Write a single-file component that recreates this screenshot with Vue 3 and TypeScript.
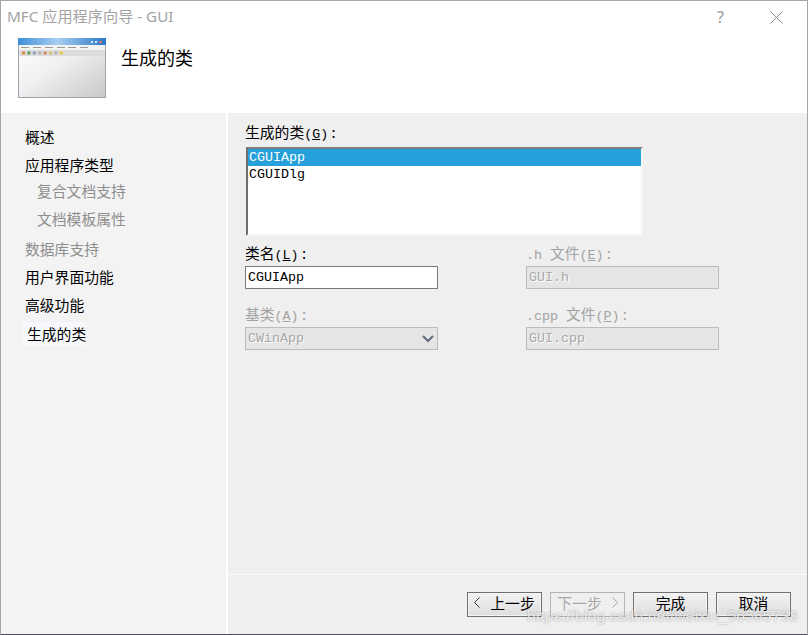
<script setup lang="ts">
interface NavItem { label: string; gap: number; sub?: boolean; off?: boolean; active?: boolean }
const nav: NavItem[] = [
  { label: '概述', gap: 0 },
  { label: '应用程序类型', gap: 4 },
  { label: '复合文档支持', gap: 2, sub: true, off: true },
  { label: '文档模板属性', gap: 4, sub: true, off: true },
  { label: '数据库支持', gap: 6, off: true },
  { label: '用户界面功能', gap: 4 },
  { label: '高级功能', gap: 4 },
  { label: '生成的类', gap: 5, active: true },
]
const menuBars = [3, 15, 27, 39, 50, 62]
const toolColors = ['#e08a3c', '#5aa05a', '#8aa0c0', '#b0b0b0', '#d08a60', '#d8c070', '#b0b0b0', '#e8c840']
</script>

<template>
  <div class="win">
    <header class="top">
      <div class="titlebar">
        <span class="title">MFC 应用程序向导 - GUI</span>
        <span class="help">?</span>
        <svg class="close" width="13" height="13" viewBox="0 0 13 13">
          <path d="M0.5 0.5L12.5 12.5M12.5 0.5L0.5 12.5" stroke="#8a8a8a" stroke-width="1" fill="none" />
        </svg>
      </div>
      <div class="banner">
        <svg class="thumb" width="88" height="60" viewBox="0 0 88 60">
          <defs>
            <linearGradient id="tb" x1="0" x2="1" y1="0" y2="0">
              <stop offset="0" stop-color="#3f8fd8" />
              <stop offset="0.45" stop-color="#a8cdef" />
              <stop offset="1" stop-color="#2a78c8" />
            </linearGradient>
            <linearGradient id="bd" x1="0" x2="1" y1="0" y2="1">
              <stop offset="0" stop-color="#ffffff" />
              <stop offset="0.45" stop-color="#f0f0f2" />
              <stop offset="1" stop-color="#c8c8c8" />
            </linearGradient>
          </defs>
          <rect x="0.5" y="0.5" width="87" height="59" fill="url(#bd)" stroke="#a2a2aa" />
          <rect x="0" y="0" width="88" height="7" fill="url(#tb)" />
          <rect x="73" y="3" width="2" height="2" fill="#dce8f4" />
          <rect x="77" y="3" width="2" height="2" fill="#dce8f4" />
          <rect x="81" y="3" width="3" height="2" fill="#d87860" />
          <rect x="1" y="7" width="86" height="5" fill="#f4f4f4" />
          <rect v-for="(x, i) in menuBars" :key="i" :x="x" y="9" width="8" height="1" fill="#9a9a9a" />
          <rect x="1" y="12" width="86" height="6" fill="#dcdcdc" />
          <rect v-for="(c, i) in toolColors" :key="c + i" :x="4 + i * 5.4" y="13.5" width="3" height="3" :fill="c" />
        </svg>
        <h1 class="heading">生成的类</h1>
      </div>
    </header>

    <div class="main">
      <nav class="side">
        <div
          v-for="item in nav"
          :key="item.label"
          class="nav-item"
          :class="{ sub: item.sub, off: item.off, active: item.active }"
          :style="{ marginTop: item.gap + 'px' }"
        >{{ item.label }}</div>
      </nav>

      <section class="panel">
        <div class="content">
          <div class="label">生成的类<span class="mn">(<u>G</u>)</span> :</div>
          <div class="list">
            <div class="row selected">CGUIApp</div>
            <div class="row">CGUIDlg</div>
          </div>

          <div class="form">
            <div class="field">
              <div class="label">类名<span class="mn">(<u>L</u>)</span> :</div>
              <div class="box edit">CGUIApp</div>
            </div>
            <div class="field">
              <div class="label dim"><span class="mn">.h&nbsp;</span>文件<span class="mn">(<u>E</u>)</span> :</div>
              <div class="box disabled">GUI.h</div>
            </div>
            <div class="field">
              <div class="label dim">基类<span class="mn">(<u>A</u>)</span> :</div>
              <div class="box disabled combo">
                <span>CWinApp</span>
                <svg width="12" height="8" viewBox="0 0 12 8">
                  <path d="M1 1L6 6L11 1" stroke="#5f6b78" stroke-width="2" fill="none" />
                </svg>
              </div>
            </div>
            <div class="field">
              <div class="label dim"><span class="mn">.cpp&nbsp;</span>文件<span class="mn">(<u>P</u>)</span> :</div>
              <div class="box disabled">GUI.cpp</div>
            </div>
          </div>
        </div>

        <footer class="foot">
          <button class="btn">
            <svg class="chev" width="6" height="11" viewBox="0 0 6 11"><path d="M5.5 0.5L0.5 5.5L5.5 10.5" stroke="#333" fill="none" /></svg>
            <span>上一步</span>
          </button>
          <button class="btn off">
            <span>下一步</span>
            <svg class="chev" width="6" height="11" viewBox="0 0 6 11"><path d="M0.5 0.5L5.5 5.5L0.5 10.5" stroke="#a8a8a8" fill="none" /></svg>
          </button>
          <button class="btn">完成</button>
          <button class="btn">取消</button>
        </footer>
      </section>
    </div>

    <div class="mark">https://blog.csdn.net/weixin_56565733</div>
  </div>
</template>

<style>
html, body { margin: 0; padding: 0; background: #efefef; }
</style>

<style scoped>
.win {
  position: relative;
  box-sizing: border-box;
  width: 808px;
  height: 635px;
  display: flex;
  flex-direction: column;
  overflow: hidden;
  background: #fff;
  border: 1px solid #a6a6a6;
  border-bottom: 1px solid #4a5060;
  font-family: "Liberation Sans", "Noto Sans CJK SC", sans-serif;
  color: #000;
}
.top { height: 112px; flex: none; background: #fff; }
.titlebar { height: 32px; display: flex; align-items: center; padding-left: 6px; }
.title { flex: 1; font-family: "Noto Sans", "Noto Sans CJK SC", sans-serif; font-size: 15.2px; line-height: 30px; height: 32px; color: #a3a3a3; }
.help { width: 14px; margin-right: 39px; font-size: 16px; color: #9a9a9a; font-family: "Noto Sans", sans-serif; }
.close { margin-right: 24px; }
.banner { display: flex; align-items: flex-start; padding: 5px 0 0 17px; }
.thumb { flex: none; }
.heading { margin: 5px 0 0 15px; font-size: 18px; line-height: 28px; font-weight: 400; font-family: "Noto Sans CJK SC", sans-serif; }
.main { flex: 1; display: flex; min-height: 0; }
.side {
  box-sizing: border-box;
  width: 225px;
  flex: none;
  margin-right: 2px;
  padding: 12px 0 0 21px;
  background: #f3f3f3;
}
.nav-item {
  height: 24px;
  line-height: 24px;
  padding-left: 3px;
  padding-bottom: 1px;
  box-sizing: border-box;
  font-size: 14.8px;
  font-family: "Noto Sans CJK SC", sans-serif;
  white-space: nowrap;
}
.nav-item.sub { padding-left: 15px; }
.nav-item.off { color: #8e8e8e; }
.nav-item.active { width: 63px; padding-left: 5px; background: #f6f8fb; }
.panel { flex: 1; display: flex; flex-direction: column; background: #efefef; min-width: 0; }
.content { flex: 1; padding: 10px 0 0 17px; }
.label { height: 20px; line-height: 18px; font-size: 14.8px; font-family: "Noto Sans CJK SC", sans-serif; white-space: nowrap; }
.label.dim { color: #a2a2a2; }
.mn { font-family: "Liberation Mono", monospace; font-size: 13.3px; }
.list {
  box-sizing: border-box;
  width: 397px;
  height: 89px;
  margin: 4px 0 0 1px;
  background: #fff;
  border-style: solid;
  border-width: 2px;
  border-color: #808080 #f6f6f6 #f6f6f6 #6e6e6e;
}
.row, .box { font-family: "Liberation Mono", monospace; font-size: 13.33px; }
.row { height: 17px; line-height: 17px; padding-left: 1px; }
.row.selected { background: #26a0da; color: #fff; }
.form {
  display: grid;
  grid-template-columns: 193px 193px;
  column-gap: 88px;
  row-gap: 16px;
  margin-top: 8px;
}
.field { display: flex; flex-direction: column; gap: 2px; }
.box {
  box-sizing: border-box;
  height: 23px;
  line-height: 21px;
  padding-left: 2px;
  border: 1px solid #7a7a7a;
  background: #fff;
}
.box.disabled {
  background: #e5e5e5;
  border-color: #bcbcbc;
  color: #a8a8a8;
  text-shadow: 1px 1px 0 #fff;
}
.combo { display: flex; align-items: center; justify-content: space-between; padding-right: 3px; }
.foot {
  flex: none;
  box-sizing: border-box;
  height: 60px;
  padding: 17px 16px 0 0;
  border-top: 1px solid #fbfbfb;
  display: flex;
  justify-content: flex-end;
  gap: 8px;
}
.btn {
  box-sizing: border-box;
  width: 75px;
  height: 25px;
  padding: 0 0 4px;
  display: flex;
  align-items: center;
  justify-content: center;
  gap: 10px;
  border: 1px solid #707070;
  background: linear-gradient(#f2f2f2, #dedede);
  box-shadow: inset 0 0 0 1px #f4f4f4;
  font-family: "Noto Sans CJK SC", sans-serif;
  font-size: 14.8px;
  color: #000;
  white-space: nowrap;
}
.btn.off { border-color: #b4b4b4; color: #a8a8a8; background: #efefef; box-shadow: none; }
.mark {
  position: absolute;
  left: 526px;
  top: 606px;
  font-family: "Liberation Sans", sans-serif;
  font-size: 15.5px;
  letter-spacing: 0.2px;
  color: rgba(255, 255, 255, 0.75);
  text-shadow: 0 0 2px rgba(90, 90, 90, 0.6);
  white-space: nowrap;
}
</style>
